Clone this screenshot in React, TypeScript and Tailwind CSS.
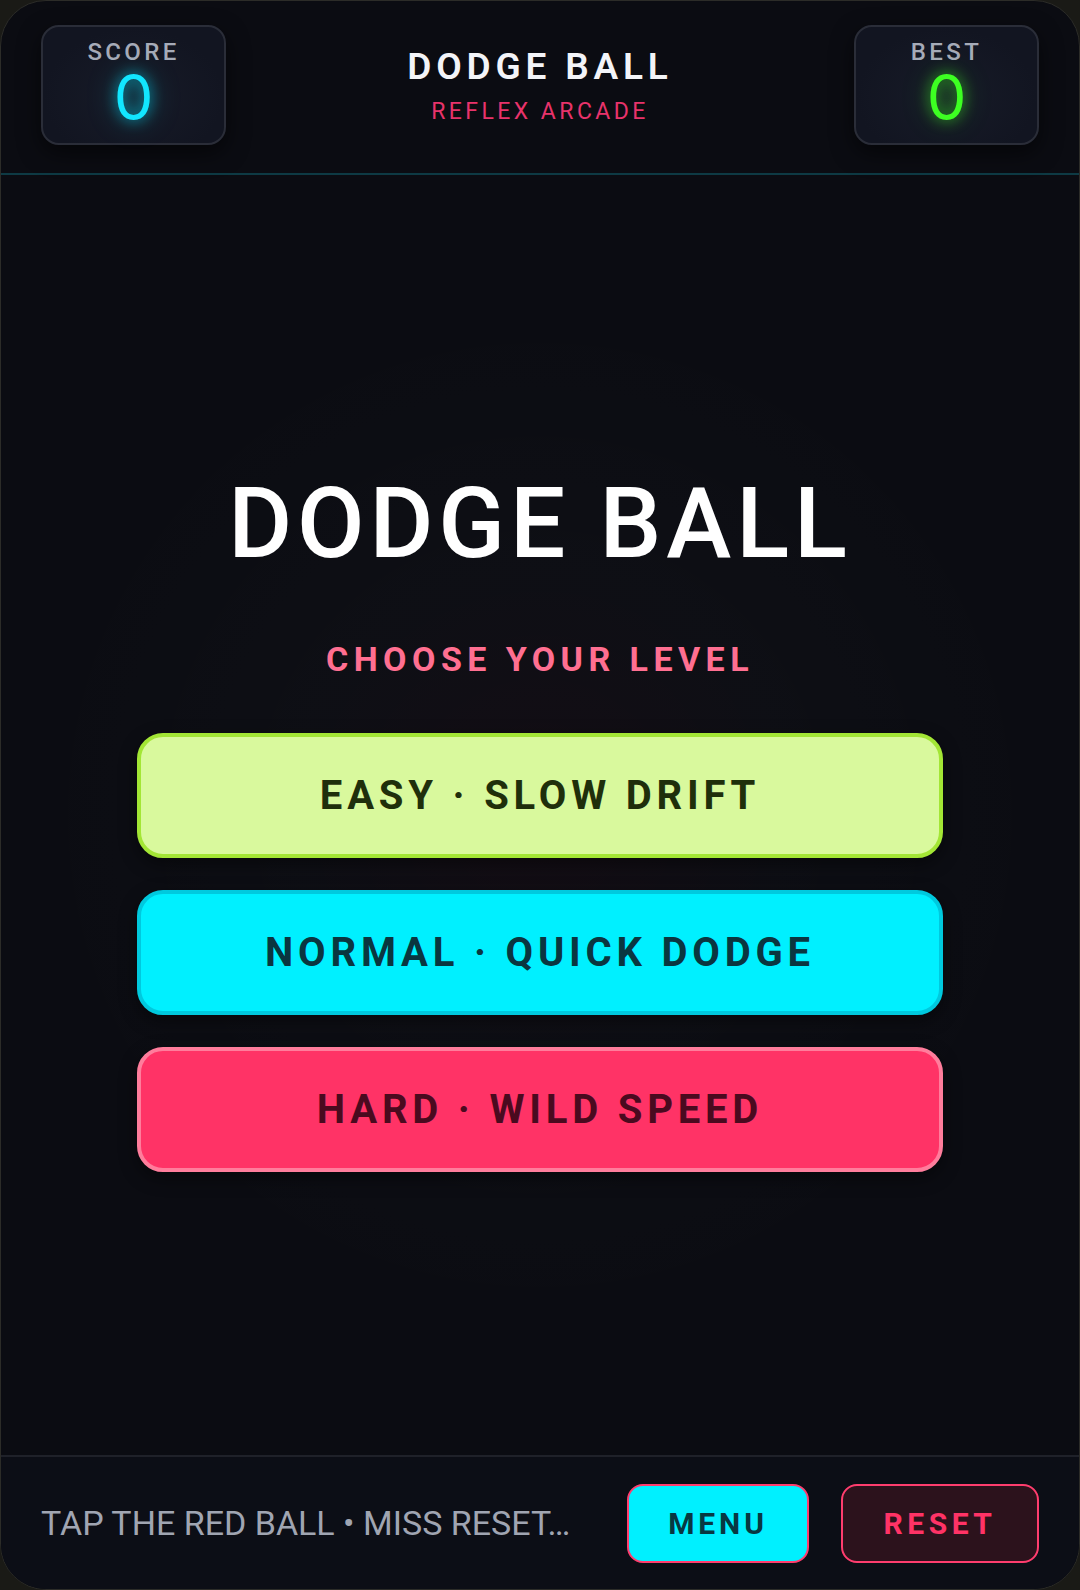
import React from 'react';

const FONT = "font-['Roboto','Liberation_Sans',sans-serif]";

interface StatBoxProps {
  label: string;
  value: number;
  tone: 'cyan' | 'green';
}

const StatBox: React.FC<StatBoxProps> = ({ label, value, tone }) => {
  const valueClass =
    tone === 'cyan'
      ? 'text-[#12e6ff] [text-shadow:0_0_14px_rgba(0,229,255,0.75),0_0_30px_rgba(0,229,255,0.35)]'
      : 'text-[#3dff22] [text-shadow:0_0_14px_rgba(61,255,34,0.7),0_0_30px_rgba(61,255,34,0.3)]';
  return (
    <div className="flex h-[120px] w-[185px] flex-col items-center rounded-[18px] border-2 border-[#2a2d38] bg-[radial-gradient(ellipse_at_50%_60%,#171b28_0%,#121521_70%)] pt-[13px] shadow-[0_8px_22px_rgba(0,0,0,0.55)]">
      <span className="text-[24px] font-medium leading-none tracking-[0.14em] text-[#a6abb8]">{label}</span>
      <span className={`mt-[4px] font-['Inter','Roboto',sans-serif] text-[63px] font-normal leading-[0.95] ${valueClass}`}>
        {value}
      </span>
    </div>
  );
};

const levels = [
  {
    id: 'easy',
    text: 'EASY · SLOW DRIFT',
    className: 'bg-[#d9f99d] border-[#a3e635] text-[#1f2f0b]',
  },
  {
    id: 'normal',
    text: 'NORMAL · QUICK DODGE',
    className: 'bg-[#00f0ff] border-[#00c9de] text-[#0a3640]',
  },
  {
    id: 'hard',
    text: 'HARD · WILD SPEED',
    className: 'bg-[#ff3366] border-[#ff7d9c] text-[#4a0a1f]',
  },
];

export default function App() {
  return (
    <div className={`h-[1590px] w-full bg-[#1a1a16] ${FONT}`}>
      <div className="flex h-full flex-col overflow-hidden rounded-[46px] border border-[#2c2c28] bg-[#0b0c12]">
        {/* Header */}
        <header className="flex h-[174px] shrink-0 items-start justify-between border-b-2 border-[#0e3a44] px-[40px] pt-[24px]">
          <StatBox label="SCORE" value={0} tone="cyan" />
          <div className="flex flex-col items-center pt-[23px]">
            <h1 className="text-[37px] font-semibold leading-none tracking-[0.13em] text-[#f3f4f8]">DODGE BALL</h1>
            <p className="mt-[15px] text-[23px] leading-none tracking-[0.15em] text-[#e8336b]">REFLEX ARCADE</p>
          </div>
          <StatBox label="BEST" value={0} tone="green" />
        </header>

        {/* Level select */}
        <main className="flex flex-1 flex-col items-center bg-[radial-gradient(circle_at_50%_50%,rgba(255,40,80,0.035)_0%,rgba(255,255,255,0.012)_30%,transparent_62%)] pt-[300px]">
          <h2 className="text-[98px] font-medium leading-none tracking-[0.05em] text-white">DODGE BALL</h2>
          <p className="mt-[69px] text-[34px] font-bold leading-none tracking-[0.16em] text-[#ff6f91]">
            CHOOSE YOUR LEVEL
          </p>
          <div className="mt-[57px] flex w-[806px] flex-col gap-[32px]">
            {levels.map((level) => (
              <button
                key={level.id}
                className={`flex h-[125px] w-full items-center justify-center rounded-[26px] border-4 text-[40px] font-bold tracking-[0.12em] shadow-[0_6px_18px_rgba(0,0,0,0.45)] ${level.className}`}
              >
                {level.text}
              </button>
            ))}
          </div>
        </main>

        {/* Footer */}
        <footer className="flex h-[134px] shrink-0 items-center gap-[32px] border-t-2 border-[#1f2129] bg-[#0c0e16] px-[40px]">
          <p className="min-w-0 flex-1 whitespace-nowrap text-[34px] leading-none text-[#a0a5b2]">
            TAP THE RED BALL • MISS RESET…
          </p>
          <button className="h-[79px] w-[182px] shrink-0 rounded-[16px] border-2 border-[#ff3d6e] bg-[#00f0ff] text-[30px] font-bold tracking-[0.13em] text-[#083842]">
            MENU
          </button>
          <button className="h-[79px] w-[198px] shrink-0 rounded-[16px] border-2 border-[#ff3d6e] bg-[#2c121c] text-[30px] font-bold tracking-[0.15em] text-[#ff3366]">
            RESET
          </button>
        </footer>
      </div>
    </div>
  );
}
